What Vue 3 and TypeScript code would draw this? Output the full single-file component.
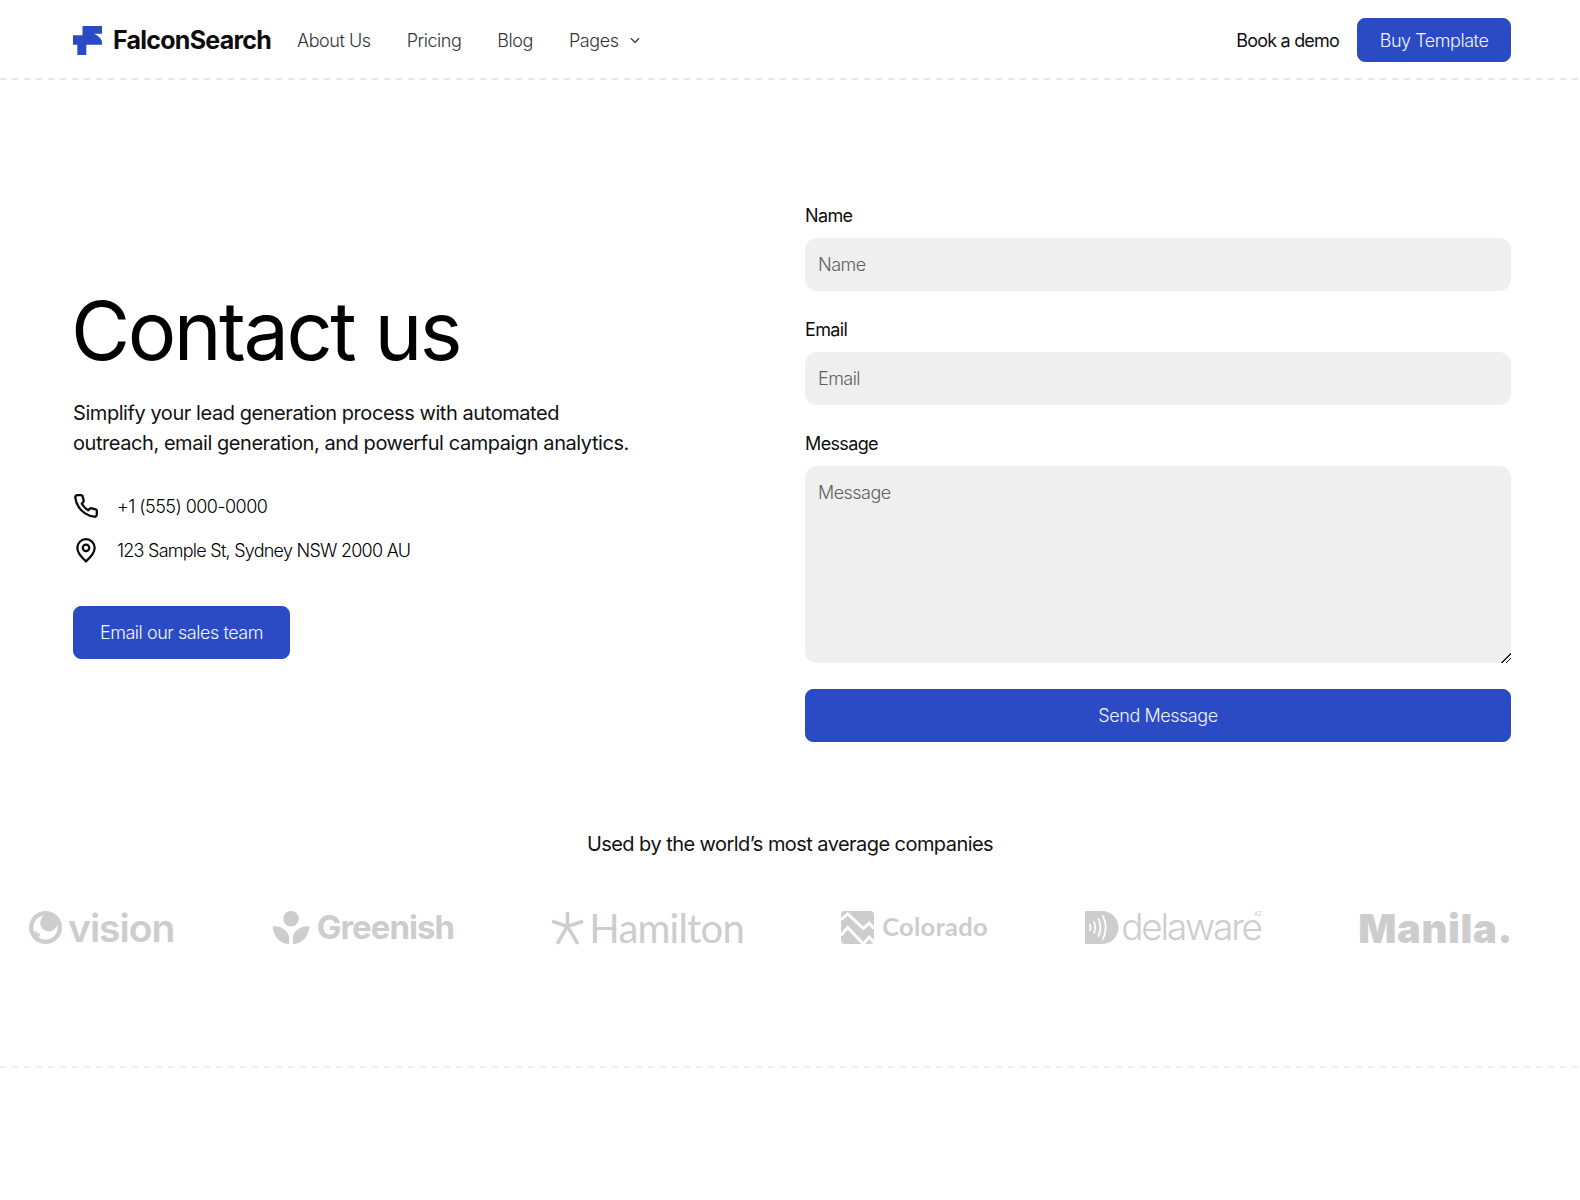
<script setup lang="ts">
const navLinks = ["About Us", "Pricing", "Blog"];
</script>

<template>
  <div class="page">
    <header class="nav">
      <div class="nav-left">
        <a class="brand">
          <svg class="brand-mark" viewBox="0 0 29 29" aria-hidden="true">
            <path
              d="M9.500 0H29V7.700H21C24.500 9 27.500 11.500 29 15.500V18.700H13.300V29H4.300V18.700H0V9.300H9.500Z"
              fill="#2a4bc4"
            />
          </svg>
          <span class="brand-name">FalconSearch</span>
        </a>
        <nav class="links">
          <a v-for="link in navLinks" :key="link" class="link">{{ link }}</a>
          <a class="link link-drop">
            Pages
            <svg class="chev" viewBox="0 0 12 12" aria-hidden="true">
              <path d="M2.500 4.500 6 8l3.500-3.500" fill="none" stroke="#333" stroke-width="1.100" />
            </svg>
          </a>
        </nav>
      </div>
      <div class="nav-right">
        <a class="demo">Book a demo</a>
        <button class="btn btn-nav">Buy Template</button>
      </div>
    </header>

    <main class="hero">
      <section class="intro">
        <h1>Contact us</h1>
        <p class="lead">
          Simplify your lead generation process with automated<br />
          outreach, email generation, and powerful campaign analytics.
        </p>
        <ul class="contact">
          <li>
            <svg class="ico" viewBox="0 0 24 24" aria-hidden="true">
              <path
                d="M22 16.900v3a2 2 0 0 1-2.200 2 19.800 19.800 0 0 1-8.600-3.100 19.500 19.500 0 0 1-6-6A19.800 19.800 0 0 1 2.100 4.200 2 2 0 0 1 4.100 2h3a2 2 0 0 1 2 1.700c.1 1 .4 1.900.7 2.800a2 2 0 0 1-.5 2.100L8.100 9.900a16 16 0 0 0 6 6l1.300-1.300a2 2 0 0 1 2.100-.4c.9.300 1.800.6 2.800.7a2 2 0 0 1 1.700 2Z"
              />
            </svg>
            <span>+1 (555) 000-0000</span>
          </li>
          <li>
            <svg class="ico" viewBox="0 0 24 24" aria-hidden="true">
              <path d="M12 22.500c-4-3.500-8-7.500-8-12.500a8 8 0 0 1 16 0c0 5-4 9-8 12.500Z" />
              <circle cx="12" cy="10" r="3" />
            </svg>
            <span class="address">123 Sample St, Sydney NSW 2000 AU</span>
          </li>
        </ul>
        <button class="btn btn-sales">Email our sales team</button>
      </section>

      <form class="form" @submit.prevent>
        <label class="field">
          <span>Name</span>
          <input type="text" placeholder="Name" />
        </label>
        <label class="field">
          <span>Email</span>
          <input type="text" placeholder="Email" />
        </label>
        <label class="field field-last">
          <span>Message</span>
          <textarea placeholder="Message"></textarea>
        </label>
        <button class="btn btn-send">Send Message</button>
      </form>
    </main>

    <section class="used">
      <p class="used-title">Used by the world’s most average companies</p>
      <div class="logos">
        <div class="logo logo-vision">
          <svg viewBox="0 0 34 34" aria-hidden="true">
            <path
              fill-rule="evenodd"
              d="M17 0a17 17 0 1 1 0 34 17 17 0 0 1 0-34Zm0 4.500a12.500 12.500 0 1 0 0 25 12.500 12.500 0 0 0 0-25Z"
            />
            <circle cx="20.500" cy="12" r="9" />
            <circle cx="8" cy="24" r="3.200" />
            <circle cx="9.500" cy="21.800" r="1.500" fill="#fff" />
          </svg>
          <span>vision</span>
        </div>
        <div class="logo logo-greenish">
          <svg viewBox="0 0 38 34" aria-hidden="true">
            <circle cx="19" cy="8" r="8" />
            <path d="M0 16c6-1 14 2 17 10v8C8 34 1 27 0 16ZM38 16c-6-1-14 2-17 10v8c9 0 16-7 17-18Z" />
          </svg>
          <span>Greenish</span>
        </div>
        <div class="logo logo-hamilton">
          <svg viewBox="0 0 32 32" aria-hidden="true">
            <path d="M16 0v14M1 9l15 5 15-5M16 14 6 31M16 14l10 17" fill="none" stroke="#cdcdcd" stroke-width="3.400" />
          </svg>
          <span>Hamilton</span>
        </div>
        <div class="logo logo-colorado">
          <svg viewBox="0 0 34 34" aria-hidden="true">
            <rect width="34" height="34" rx="4" />
            <path d="M0 9 7 3 23 18 29 12.500 34 18M0 25 7 17 23 34 29 27 34 32" fill="none" stroke="#fff" stroke-width="3" />
          </svg>
          <span>Colorado</span>
        </div>
        <div class="logo logo-delaware">
          <svg viewBox="0 0 34 33" aria-hidden="true">
            <path d="M0 0H17a16.500 16.500 0 0 1 0 33H0Z" />
            <g fill="none" stroke="#fff" stroke-width="1.700" stroke-linecap="round">
              <path d="M5 13.500c.8 2 .8 4 0 6" />
              <path d="M9 11c1.500 3.500 1.500 7.500 0 11" />
              <path d="M13.500 8c2.500 5.500 2.500 11.500 0 17" />
              <path d="M18 5c3.500 7.500 3.500 15.500 0 23" />
            </g>
          </svg>
          <span>delaware</span>
          <sup>AZ</sup>
        </div>
        <div class="logo logo-manila"><span>Manila.</span></div>
      </div>
    </section>

    <div class="rule-bottom"></div>
  </div>
</template>

<style scoped>
.page {
  width: 1580px;
  height: 1200px;
  overflow: hidden;
  background: #fff;
  color: #0a0a0a;
  font-family: Inter, "Liberation Sans", sans-serif;
}

.nav {
  height: 80px;
  padding: 0 69px 0 73px;
  display: flex;
  align-items: center;
  justify-content: space-between;
  background-image: repeating-linear-gradient(90deg, #e6e6e6 0 6px, transparent 6px 12px);
  background-size: 100% 2px;
  background-position: 0 100%;
  background-repeat: no-repeat;
}

.nav-left,
.nav-right,
.brand,
.links,
.link-drop {
  display: flex;
  align-items: center;
}

.brand {
  gap: 11px;
}

.brand-mark {
  width: 29px;
  height: 29px;
  display: block;
}

.brand-name {
  font-size: 25px;
  font-weight: 700;
  letter-spacing: -0.03em;
  color: #0d0d0d;
}

.links {
  margin-left: 26px;
  gap: 36px;
}

.link {
  font-size: 18px;
  font-weight: 300;
  letter-spacing: -0.025em;
  color: #333;
}

.link-drop {
  gap: 10px;
}

.chev {
  width: 14px;
  height: 14px;
}

.nav-right {
  gap: 18px;
}

.demo {
  font-size: 18px;
  font-weight: 400;
  letter-spacing: -0.045em;
  color: #111;
}

.btn {
  border: 1px solid #2a4bc4;
  background: #2a4bc4;
  color: #f3f5fd;
  font-family: inherit;
  font-weight: 300;
  font-size: 18px;
  letter-spacing: -0.025em;
  border-radius: 8px;
  padding: 0;
}

.btn-nav {
  width: 154px;
  height: 44px;
}

.hero {
  display: grid;
  grid-template-columns: 1fr 706px;
  align-items: center;
  padding: 124px 69px 0 73px;
}

h1 {
  margin: 0 0 0 -2px;
  font-size: 81px;
  line-height: 1.1;
  font-weight: 400;
  letter-spacing: -0.031em;
  color: #000;
}

.lead {
  margin: 23px 0 0;
  font-size: 20px;
  line-height: 29.500px;
  letter-spacing: -0.022em;
  color: #111;
}

.contact {
  list-style: none;
  margin: 36px 0 0;
  padding: 0;
  display: flex;
  flex-direction: column;
  gap: 20px;
}

.contact li {
  display: flex;
  align-items: center;
  gap: 18px;
  height: 24px;
  font-size: 18px;
  font-weight: 300;
  letter-spacing: -0.03em;
  color: #000;
}

.contact .address {
  letter-spacing: -0.042em;
}

.ico {
  width: 26px;
  height: 26px;
  fill: none;
  stroke: #0a0a0a;
  stroke-width: 2.100;
  stroke-linejoin: round;
  stroke-linecap: round;
}

.btn-sales {
  display: block;
  margin-top: 44px;
  width: 217px;
  height: 53px;
}

.form {
  display: flex;
  flex-direction: column;
}

.field {
  display: flex;
  flex-direction: column;
  gap: 10px;
  margin-bottom: 27px;
}

.field-last {
  margin-bottom: 26px;
}

.field span {
  font-size: 18px;
  line-height: 24px;
  font-weight: 400;
  letter-spacing: -0.035em;
  color: #0d0d0d;
}

.field input,
.field textarea {
  box-sizing: border-box;
  width: 100%;
  border: 0;
  outline: 0;
  border-radius: 12px;
  background: #efefef;
  padding: 0 13px;
  font-family: inherit;
  font-size: 18px;
  font-weight: 300;
  letter-spacing: -0.03em;
  color: #333;
}

.field input {
  height: 53px;
}

.field textarea {
  display: block;
  height: 197px;
  padding-top: 15px;
  line-height: 24px;
}

.field textarea::-webkit-resizer {
  background: linear-gradient(135deg, transparent 66%, #222 66% 71%, transparent 71% 80%, #222 80% 85%, transparent 85%);
}

.field input::placeholder,
.field textarea::placeholder {
  color: #5f5f5f;
  opacity: 1;
}

.btn-send {
  height: 53px;
  width: 100%;
}

.used {
  margin-top: 88px;
}

.used-title {
  margin: 0;
  text-align: center;
  font-size: 20px;
  line-height: 28px;
  letter-spacing: -0.028em;
  color: #111;
}

.logos {
  margin-top: 47px;
  padding: 0 67px 0 29px;
  display: flex;
  align-items: center;
  justify-content: space-between;
  height: 44px;
}

.logo {
  display: flex;
  align-items: center;
  color: #cdcdcd;
  fill: #cdcdcd;
  line-height: 1;
  position: relative;
}

.logo svg {
  display: block;
  flex-shrink: 0;
}

.logo-vision {
  gap: 6px;
}

.logo-vision svg {
  width: 33px;
  height: 33px;
}

.logo-vision span {
  font-size: 39px;
  font-weight: 600;
  letter-spacing: -0.026em;
}

.logo-greenish {
  gap: 7px;
}

.logo-greenish svg {
  width: 38px;
  height: 33px;
}

.logo-greenish span {
  font-size: 33px;
  font-weight: 700;
  letter-spacing: -0.03em;
}

.logo-hamilton {
  gap: 5px;
  padding-top: 2px;
}

.logo-hamilton svg {
  width: 33px;
  height: 33px;
}

.logo-hamilton span {
  font-family: Lato, sans-serif;
  font-size: 40px;
  font-weight: 400;
  letter-spacing: -0.02em;
}

.logo-colorado {
  gap: 8px;
}

.logo-colorado svg {
  width: 33px;
  height: 33px;
}

.logo-colorado span {
  font-family: Lato, sans-serif;
  font-size: 25.500px;
  font-weight: 700;
  letter-spacing: 0.01em;
}

.logo-delaware {
  gap: 2px;
}

.logo-delaware svg {
  width: 34px;
  height: 33px;
}

.logo-delaware span {
  font-size: 37px;
  line-height: 0.55;
  font-weight: 300;
  letter-spacing: -0.06em;
}

.logo-delaware sup {
  position: absolute;
  right: -1px;
  top: 0;
  font-size: 6px;
  line-height: 6px;
  font-weight: 400;
}

.logo-manila {
  padding-top: 3px;
}

.logo-manila span {
  font-size: 40px;
  font-weight: 900;
  letter-spacing: 0.015em;
}

.rule-bottom {
  margin-top: 117px;
  height: 2px;
  background-image: repeating-linear-gradient(90deg, #efefef 0 6px, transparent 6px 12px);
}
</style>

<style>
html,
body {
  margin: 0;
  background: #fff;
}
</style>
